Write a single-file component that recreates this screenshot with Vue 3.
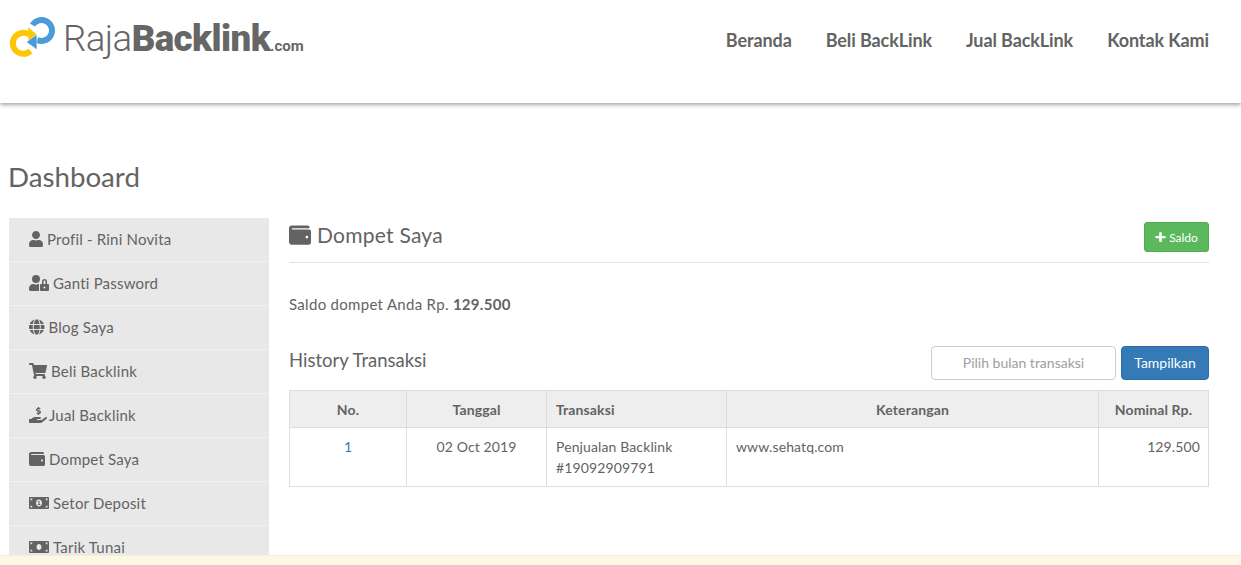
<template>
  <div class="page">
    <header class="topbar">
      <a class="logo">
        <svg class="logo-mark" viewBox="0 0 46 41" width="46" height="41">
          <path d="M20 17.5 A10.5 10.5 0 1 0 21.5 34" fill="none" stroke="#fdc600" stroke-width="6" />
          <path d="M19.3 10 L27.6 17.7 L19.3 25 Z" fill="#fdc600" />
          <path d="M23.5 8 A10.5 10.5 0 1 1 28 23" fill="none" stroke="#4b9bd8" stroke-width="6" />
          <path d="M27.7 17.7 L17.7 25 L27.7 32.3 Z" fill="#4b9bd8" stroke="#fff" stroke-width="1" paint-order="stroke" />
        </svg>
        <span class="logo-text"><span class="logo-light">Raja</span><b>Backlink</b><small>.com</small></span>
      </a>
      <nav class="topnav">
        <a v-for="link in navLinks" :key="link">{{ link }}</a>
      </nav>
    </header>

    <main class="content">
      <h1>Dashboard</h1>
      <div class="columns">
        <aside class="sidebar">
          <a v-for="item in menu" :key="item.label" class="side-item">
            <svg :viewBox="icons[item.icon].box" class="side-icon" :style="{ width: icons[item.icon].w + 'px' }">
              <path :d="icons[item.icon].d" fill="currentColor" />
            </svg>
            <span>{{ item.label }}</span>
          </a>
        </aside>

        <section class="panel">
          <div class="panel-head">
            <h2>
              <svg :viewBox="icons.wallet.box" class="head-icon"><path :d="icons.wallet.d" fill="currentColor" /></svg>
              Dompet Saya
            </h2>
            <button class="btn-saldo">
              <svg :viewBox="icons.plus.box" class="plus-icon"><path :d="icons.plus.d" fill="currentColor" /></svg>
              Saldo
            </button>
          </div>

          <p class="balance">Saldo dompet Anda Rp. <b>129.500</b></p>

          <div class="history-head">
            <h3>History Transaksi</h3>
            <form class="filter" @submit.prevent>
              <input type="text" placeholder="Pilih bulan transaksi" />
              <button class="btn-show">Tampilkan</button>
            </form>
          </div>

          <table>
            <colgroup>
              <col style="width: 117px" />
              <col style="width: 140px" />
              <col style="width: 180px" />
              <col style="width: 372px" />
              <col />
            </colgroup>
            <thead>
              <tr>
                <th>No.</th>
                <th>Tanggal</th>
                <th class="left">Transaksi</th>
                <th>Keterangan</th>
                <th>Nominal Rp.</th>
              </tr>
            </thead>
            <tbody>
              <tr v-for="row in rows" :key="row.no">
                <td class="center no">{{ row.no }}</td>
                <td class="center">{{ row.date }}</td>
                <td>Penjualan Backlink<br />{{ row.ref }}</td>
                <td>{{ row.note }}</td>
                <td class="right">{{ row.amount }}</td>
              </tr>
            </tbody>
          </table>
        </section>
      </div>
    </main>

    <div class="notice"></div>
  </div>
</template>

<script setup>
const navLinks = ['Beranda', 'Beli BackLink', 'Jual BackLink', 'Kontak Kami']

const icons = {
  user: { box: '0 0 448 512', w: 14, d: 'M224 256c70.7 0 128-57.3 128-128S294.7 0 224 0 96 57.3 96 128s57.3 128 128 128zm89.6 32h-16.7c-22.2 10.2-46.9 16-72.9 16s-50.6-5.8-72.9-16h-16.7C60.2 288 0 348.2 0 422.4V464c0 26.5 21.5 48 48 48h352c26.5 0 48-21.5 48-48v-41.6c0-74.2-60.2-134.4-134.4-134.4z' },
  lock: { box: '0 0 640 512', w: 20, d: 'M224 256A128 128 0 1 0 96 128a128 128 0 0 0 128 128zm96 64a63.08 63.08 0 0 1 8.1-30.5c-4.8-.5-9.5-1.5-14.5-1.5h-16.7a174.08 174.08 0 0 1-145.8 0h-16.7A134.43 134.43 0 0 0 0 422.4V464a48 48 0 0 0 48 48h280.9a63.54 63.54 0 0 1-8.9-32zm288-32h-32v-80a80 80 0 0 0-160 0v80h-32a32 32 0 0 0-32 32v160a32 32 0 0 0 32 32h224a32 32 0 0 0 32-32V320a32 32 0 0 0-32-32zM496 432a32 32 0 1 1 32-32 32 32 0 0 1-32 32zm32-144h-64v-80a32 32 0 0 1 64 0z' },
  globe: { box: '0 0 496 512', w: 15.5, d: 'M336.5 160C322 70.7 287.8 8 248 8s-74 62.7-88.5 152h177zM152 256c0 22.2 1.2 43.5 3.3 64h185.3c2.1-20.5 3.3-41.8 3.3-64s-1.2-43.5-3.3-64H155.3c-2.1 20.5-3.3 41.8-3.3 64zm324.7-96c-28.6-67.9-86.5-120.4-158-141.6 24.4 33.8 41.2 84.7 50 141.6h108zM177.2 18.4C105.8 39.6 47.8 92.1 19.3 160h108c8.7-56.9 25.5-107.8 49.9-141.6zM487.4 192H372.7c2.1 21 3.3 42.5 3.3 64s-1.2 43-3.3 64h114.6c5.5-20.5 8.6-41.8 8.6-64s-3.1-43.5-8.5-64zM120 256c0-21.5 1.2-43 3.3-64H8.6C3.2 212.5 0 233.8 0 256s3.2 43.5 8.6 64h114.6c-2-21-3.2-42.5-3.2-64zm39.5 96c14.5 89.3 48.7 152 88.5 152s74-62.7 88.5-152h-177zm159.3 141.6c71.4-21.2 129.4-73.7 158-141.6h-108c-8.8 56.9-25.6 107.8-50 141.6zM19.3 352c28.6 67.9 86.5 120.4 158 141.6-24.4-33.8-41.2-84.7-50-141.6h-108z' },
  cart: { box: '0 0 576 512', w: 18, d: 'M528.12 301.319l47.273-208C578.806 78.301 567.391 64 551.99 64H159.208l-9.166-44.81C147.758 8.021 137.93 0 126.529 0H24C10.745 0 0 10.745 0 24v16c0 13.255 10.745 24 24 24h69.883l70.248 343.435C147.325 417.1 136 435.222 136 456c0 30.928 25.072 56 56 56s56-25.072 56-56c0-15.674-6.447-29.835-16.824-40h209.647C430.447 426.165 424 440.326 424 456c0 30.928 25.072 56 56 56s56-25.072 56-56c0-22.172-12.888-41.332-31.579-50.405l5.517-24.276c3.413-15.018-8.002-29.319-23.403-29.319H218.117l-6.545-32h293.145c11.206 0 20.92-7.754 23.403-18.681z' },
  hand: { box: '0 0 512 512', w: 16, d: 'M271.06,144.3l54.27,14.3a8.59,8.59,0,0,1,6.63,8.1c0,4.6-4.09,8.4-9.12,8.4h-35.6a30,30,0,0,1-11.19-2.2c-5.24-2.2-11.28-1.7-15.3,2l-19,17.5a11.68,11.68,0,0,0-2.25,2.66,11.42,11.42,0,0,0,3.88,15.74,83.77,83.77,0,0,0,34.51,11.5V240c0,8.8,7.83,16,17.37,16h17.37c9.55,0,17.38-7.2,17.38-16V221.9c32.93-3.6,57.84-31,53.5-63-3.15-23-22.46-41.3-46.56-47.7L282.68,97.4a8.59,8.59,0,0,1-6.63-8.1c0-4.6,4.09-8.4,9.12-8.4h35.6A30,30,0,0,1,332,83.1c5.23,2.2,11.28,1.7,15.3-2l19-17.5A11.31,11.31,0,0,0,368.47,61a11.43,11.43,0,0,0-3.84-15.78,83.82,83.82,0,0,0-34.52-11.5V16c0-8.8-7.82-16-17.37-16H295.37C285.82,0,278,7.2,278,16V34.1c-32.89,3.6-57.85,31-53.51,63C227.63,120.1,247,138.4,271.06,144.3ZM565.27,328.1c-11.8-10.7-30.2-10-42.6,0L430.27,402a63.64,63.64,0,0,1-40,14H272a16,16,0,0,1,0-32h78.29c15.9,0,30.71-10.9,33.25-26.6a31.2,31.2,0,0,0,.46-5.46A32,32,0,0,0,352,320H192a117.66,117.66,0,0,0-74.1,26.29L71.4,384H16A16,16,0,0,0,0,400v96a16,16,0,0,0,16,16H372.77a64,64,0,0,0,40-14L564,377a32,32,0,0,0,1.28-48.9Z' },
  wallet: { box: '0 0 512 512', w: 16, d: 'M461.2 128H80c-8.84 0-16-7.16-16-16s7.16-16 16-16h384c8.84 0 16-7.16 16-16 0-26.51-21.49-48-48-48H64C28.65 32 0 60.65 0 96v320c0 35.35 28.65 64 64 64h397.2c28.02 0 50.8-21.53 50.8-48V176c0-26.47-22.78-48-50.8-48zM416 336c-17.67 0-32-14.33-32-32s14.33-32 32-32 32 14.33 32 32-14.33 32-32 32z' },
  billAlt: { box: '0 0 640 512', w: 20, d: 'M352 288h-16v-88c0-4.42-3.58-8-8-8h-13.58c-4.74 0-9.37 1.4-13.31 4.03l-15.33 10.22a7.994 7.994 0 0 0-2.22 11.09l8.88 13.31a7.994 7.994 0 0 0 11.09 2.22l.47-.31V288h-16c-4.42 0-8 3.58-8 8v16c0 4.42 3.58 8 8 8h64c4.42 0 8-3.58 8-8v-16c0-4.42-3.58-8-8-8zM608 64H32C14.33 64 0 78.33 0 96v320c0 17.67 14.33 32 32 32h576c17.67 0 32-14.33 32-32V96c0-17.67-14.33-32-32-32zM48 400v-64c35.35 0 64 28.65 64 64H48zm0-224v-64h64c0 35.35-28.65 64-64 64zm272 192c-53.02 0-96-50.15-96-112 0-61.86 42.98-112 96-112s96 50.14 96 112c0 61.87-43 112-96 112zm272 32h-64c0-35.35 28.65-64 64-64v64zm0-224c-35.35 0-64-28.65-64-64h64v64z' },
  bill: { box: '0 0 640 512', w: 20, d: 'M608 64H32C14.33 64 0 78.33 0 96v320c0 17.67 14.33 32 32 32h576c17.67 0 32-14.33 32-32V96c0-17.67-14.33-32-32-32zM48 400v-64c35.35 0 64 28.65 64 64H48zm0-224v-64h64c0 35.35-28.65 64-64 64zm272 176c-44.19 0-80-42.99-80-96 0-53.02 35.82-96 80-96s80 42.98 80 96c0 53.03-35.83 96-80 96zm272 48h-64c0-35.35 28.65-64 64-64v64zm0-224c-35.35 0-64-28.65-64-64h64v64z' },
  plus: { box: '0 0 448 512', w: 12, d: 'M416 208H280V72c0-13.25-10.75-24-24-24h-64c-13.25 0-24 10.75-24 24v136H32c-17.67 0-32 14.33-32 32v32c0 17.67 14.33 32 32 32h136v136c0 13.25 10.75 24 24 24h64c13.25 0 24-10.75 24-24V304h136c17.67 0 32-14.33 32-32v-32c0-17.67-14.33-32-32-32z' }
}

const menu = [
  { icon: 'user', label: 'Profil - Rini Novita' },
  { icon: 'lock', label: 'Ganti Password' },
  { icon: 'globe', label: 'Blog Saya' },
  { icon: 'cart', label: 'Beli Backlink' },
  { icon: 'hand', label: 'Jual Backlink' },
  { icon: 'wallet', label: 'Dompet Saya' },
  { icon: 'billAlt', label: 'Setor Deposit' },
  { icon: 'bill', label: 'Tarik Tunai' }
]

const rows = [
  { no: 1, date: '02 Oct 2019', ref: '#19092909791', note: 'www.sehatq.com', amount: '129.500' }
]
</script>

<style>
html, body {
  margin: 0;
  height: 100%;
  overflow: hidden;
  background: #fff;
}
</style>

<style scoped>
.page {
  font-family: Lato, "Open Sans", sans-serif;
  font-size: 15px;
  color: #636363;
  height: 565px;
  overflow: hidden;
}

.topbar {
  height: 103px;
  box-sizing: border-box;
  display: flex;
  justify-content: space-between;
  align-items: flex-start;
  padding: 0 32px 0 9px;
  box-shadow: 0 2px 4px rgba(0, 0, 0, 0.35);
}

.logo {
  display: flex;
  align-items: flex-start;
  gap: 8px;
  margin-top: 17px;
}

.logo-mark {
  display: block;
}

.logo-text {
  font-family: Roboto, sans-serif;
  color: #666;
  font-size: 36.7px;
  letter-spacing: -0.6px;
  line-height: 44px;
  white-space: nowrap;
}

.logo-light {
  font-weight: 300;
}

.logo-text b {
  font-weight: 900;
}

.logo-text small {
  font-size: 15px;
  font-weight: 700;
  letter-spacing: 0;
}

.topnav {
  display: flex;
  gap: 34px;
  margin-top: 29px;
  font-size: 18px;
  font-weight: 700;
  line-height: 22px;
  letter-spacing: -0.1px;
}

.content {
  padding: 57px 32px 0 8px;
}

h1 {
  margin: 0 0 24px;
  font-size: 27.7px;
  font-weight: 400;
  line-height: 34px;
}

.columns {
  display: flex;
  gap: 20px;
  margin-left: 1px;
}

.sidebar {
  width: 260px;
  flex: none;
  background: #e8e8e8;
}

.side-item {
  height: 44px;
  box-sizing: border-box;
  display: flex;
  align-items: center;
  gap: 4px;
  padding: 0 0 1px 20px;
  border-bottom: 1px solid #f2f2f2;
  letter-spacing: 0.2px;
}

.side-icon {
  height: 16px;
  flex: none;
  overflow: visible;
}

.panel {
  flex: 1;
  min-width: 0;
}

.panel-head {
  height: 44px;
  display: flex;
  justify-content: space-between;
  align-items: flex-start;
  border-bottom: 1px solid #e2e2e2;
}

h2 {
  margin: 3px 0 0;
  font-size: 21px;
  font-weight: 400;
  line-height: 28px;
  letter-spacing: 0.25px;
  display: flex;
  align-items: center;
  gap: 6px;
}

.head-icon {
  width: 22px;
  height: 22px;
}

.btn-saldo {
  margin-top: 4px;
  width: 65px;
  height: 30px;
  border: 1px solid #4cae4c;
  border-radius: 3px;
  background: #5cb85c;
  color: #fff;
  font: inherit;
  font-size: 12px;
  display: flex;
  align-items: center;
  justify-content: center;
  gap: 3px;
  padding: 0;
}

.plus-icon {
  width: 11px;
  height: 12px;
}

.balance {
  margin: 31px 0 0;
  line-height: 20px;
  letter-spacing: 0.3px;
}

.balance b {
  font-weight: 700;
}

.history-head {
  margin-top: 32px;
  display: flex;
  justify-content: space-between;
  align-items: flex-start;
}

h3 {
  margin: 1px 0 0;
  font-size: 18.5px;
  font-weight: 400;
  line-height: 26px;
}

.filter {
  display: flex;
  gap: 5px;
}

.filter input {
  width: 185px;
  height: 34px;
  box-sizing: border-box;
  border: 1px solid #ccc;
  border-radius: 4px;
  font: inherit;
  font-size: 14px;
  text-align: center;
  padding: 0 12px 2px;
  outline: none;
}

.filter input::placeholder {
  color: #a0a0a0;
  opacity: 1;
}

.btn-show {
  width: 88px;
  height: 34px;
  border: 1px solid #2e6da4;
  border-radius: 4px;
  background: #337ab7;
  color: #fff;
  font: inherit;
  font-size: 14px;
  padding: 0 0 2px;
}

table {
  width: 920px;
  margin-top: 10px;
  table-layout: fixed;
  border-collapse: collapse;
  font-size: 14px;
  letter-spacing: 0.12px;
}

th, td {
  border: 1px solid #ddd;
  padding: 8px;
  line-height: 21px;
  text-align: left;
  vertical-align: top;
}

th {
  background: #eee;
  text-align: center;
  font-weight: 700;
  line-height: 20px;
  padding: 9px 8px 7px;
}

th.left, td:nth-child(n + 3) {
  padding-left: 9px;
}

th.left {
  text-align: left;
}

.center {
  text-align: center;
}

.right {
  text-align: right;
}

.no {
  color: #337ab7;
}

.notice {
  position: fixed;
  left: 0;
  right: 0;
  bottom: 0;
  height: 10px;
  background: #fcf8e3;
  border-top: 1px solid #f5efd5;
  box-sizing: border-box;
}
</style>
